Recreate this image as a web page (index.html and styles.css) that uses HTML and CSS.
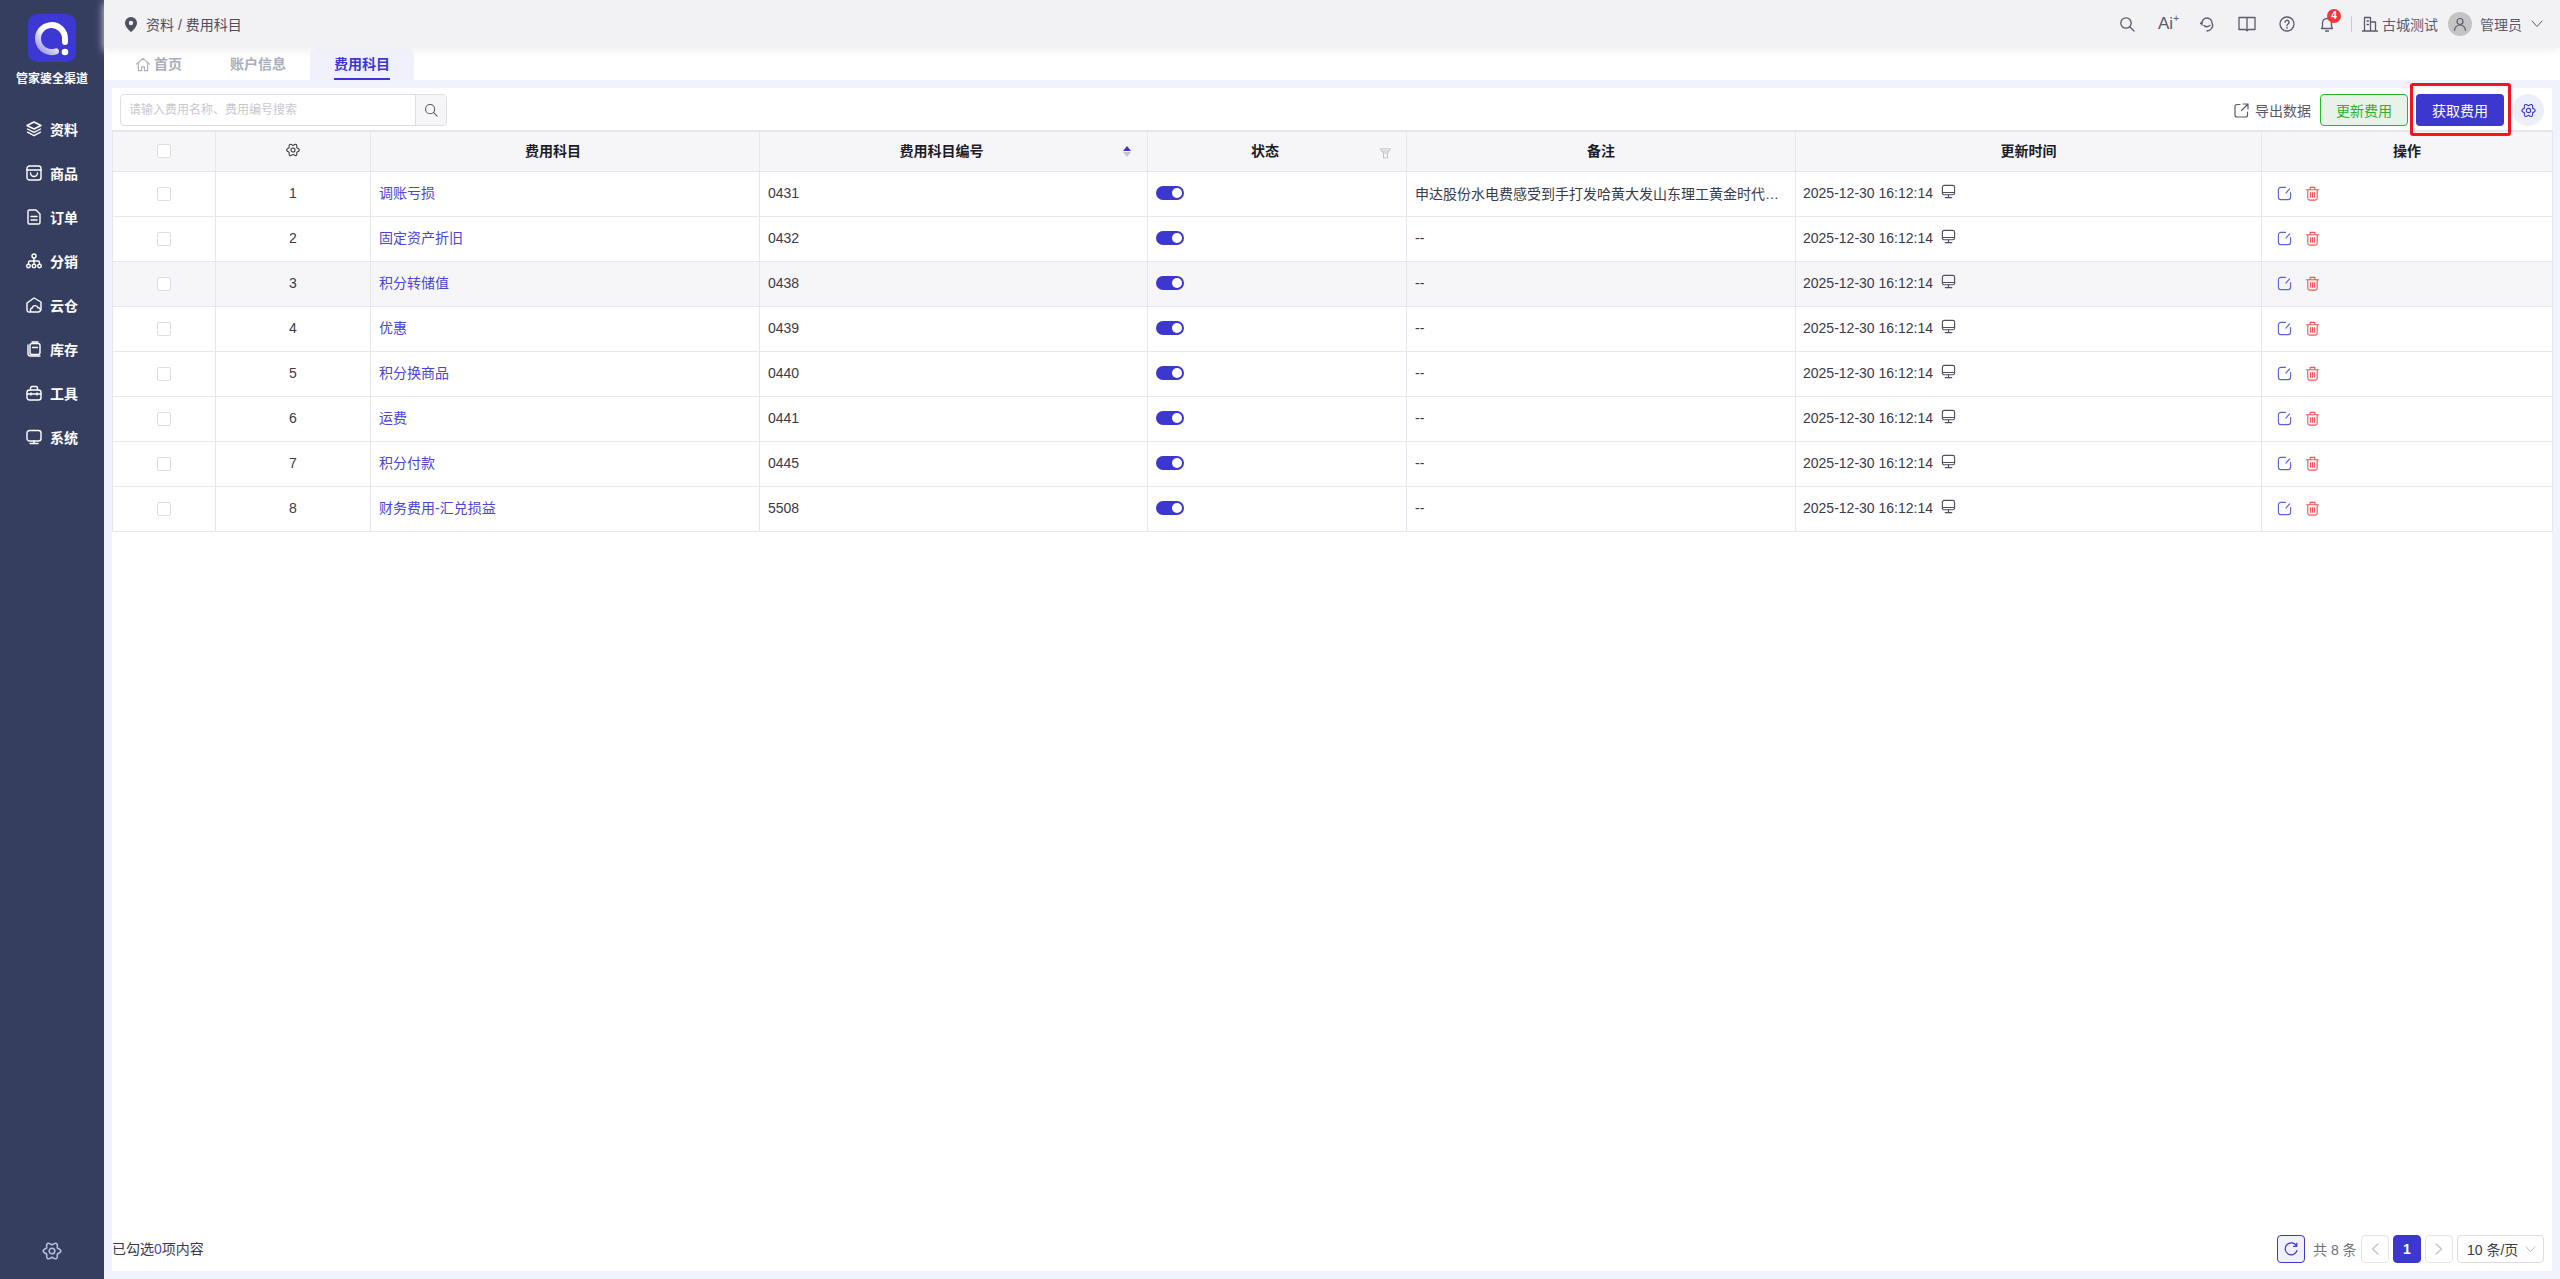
FILE: index.html
```html
<!DOCTYPE html>
<html lang="zh-CN">
<head>
    <meta charset="UTF-8">
    <title>费用科目</title>
    <link rel="stylesheet" href="styles.css">
</head>
<body>
    <svg class="sprite" width="0" height="0">
        <symbol id="i-gear" viewBox="-1 -1 18 18"><path d="M12.330 5.500Q18.070 8 12.330 10.500 13.030 16.720 8 13 2.970 16.720 3.670 10.500-2.070 8 3.670 5.500 2.970-.72 8 3 13.030-.72 12.330 5.500z"/><circle cx="8" cy="8" r="2.300"/></symbol>
        <symbol id="i-monitor" viewBox="0 0 16 16"><rect x="1.500" y="1.500" width="13" height="10" rx="2"/><path d="M1.500 9h13M8 11.500v3M4.500 14.500h7"/></symbol>
        <symbol id="i-edit" viewBox="0 0 16 16"><path d="M9 1.500H4A2.500 2.500 0 0 0 1.500 4v8A2.500 2.500 0 0 0 4 14.500h8a2.500 2.500 0 0 0 2.500-2.500V7"/><path d="M13.500 3 9.500 7.500"/></symbol>
        <symbol id="i-trash" viewBox="0 0 16 16"><path d="M1.500 4h13M5.500 4V1.500h5V4M3 4v9a2 2 0 0 0 2 2h6a2 2 0 0 0 2-2V4M6 7v5M8 7v5M10 7v5"/></symbol>
    </svg>

    <div class="app">
        <div class="sidebar">
            <div class="logo">
                <svg width="48" height="48" viewBox="0 0 48 48">
                    <defs>
                        <linearGradient id="ring" gradientUnits="userSpaceOnUse" x1="34" y1="14" x2="14" y2="36">
                            <stop offset="0.450" stop-color="#ffffff"/>
                            <stop offset="1" stop-color="#a9a6ea"/>
                        </linearGradient>
                    </defs>
                    <rect width="48" height="48" rx="9" fill="#3d38d4" stroke="none"/>
                    <path d="M28 37.300A13.500 13.500 0 1 1 37 25V28" fill="none" stroke="url(#ring)" stroke-width="6" stroke-linecap="round"/>
                    <circle cx="37" cy="38" r="3.300" fill="#fff" stroke="none"/>
                </svg>
            </div>
            <div class="brand">管家婆全渠道</div>
            <ul class="menu">
                <li><svg viewBox="0 0 16 16"><path d="M8 1 15 4.500 8 8 1 4.500zM1.500 8 8 11.300 14.500 8M1.500 11.200 8 14.700l6.500-3.500"/></svg>资料</li>
                <li><svg viewBox="0 0 16 16"><rect x="1" y="1" width="14" height="14" rx="2.500"/><path d="M1 5h14M4.500 8a3.500 3.500 0 0 0 7 0"/></svg>商品</li>
                <li><svg viewBox="0 0 16 16"><path d="M10 1H3.500A1.500 1.500 0 0 0 2 2.500v11A1.500 1.500 0 0 0 3.500 15h9a1.500 1.500 0 0 0 1.500-1.500V5zM5 7.500h6M5 11h6"/></svg>订单</li>
                <li><svg viewBox="0 0 16 16"><circle cx="8" cy="3" r="2"/><circle cx="2.500" cy="13" r="1.800"/><circle cx="8" cy="13" r="1.800"/><circle cx="13.500" cy="13" r="1.800"/><path d="M8 5v6M2.500 11V9.500A1.500 1.500 0 0 1 4 8h8a1.500 1.500 0 0 1 1.500 1.500V11"/></svg>分销</li>
                <li><svg viewBox="0 0 16 16"><path d="M5 15H3a2 2 0 0 1-2-2V6l7-5 7 4v8"/><path d="M6.500 15a2 2 0 0 1-.3-4 3 3 0 0 1 5.800-.2 2.100 2.100 0 0 1 .5 4.200z"/></svg>云仓</li>
                <li><svg viewBox="0 0 16 16"><rect x="4" y="2.500" width="10" height="11" rx="2"/><path d="M6 1h6M2 4v8.500A2.500 2.500 0 0 0 4.500 15H14M6.500 6.500h5"/></svg>库存</li>
                <li><svg viewBox="0 0 16 16"><rect x="1" y="5" width="14" height="10" rx="2.500"/><path d="M4.500 5V3a1.500 1.500 0 0 1 1.500-1.500h4A1.500 1.500 0 0 1 11.500 3v2M1 9h14M5 8v2M11 8v2"/></svg>工具</li>
                <li><svg viewBox="0 0 16 16"><rect x="1" y="1.500" width="14" height="10.500" rx="2.500"/><path d="M8 12v2.500M4 14.500h8"/></svg>系统</li>
            </ul>
            <svg class="side-gear"><use href="#i-gear"/></svg>
        </div>

        <div class="main">
            <div class="topbar">
                <div class="crumb">
                    <svg width="12" height="15" viewBox="0 0 12 15"><path d="M6 0a6 6 0 0 1 6 6c0 3.500-3.500 7-6 9-2.500-2-6-5.500-6-9a6 6 0 0 1 6-6z" fill="#4f5060" stroke="none"/><circle cx="6" cy="6" r="2.200" fill="#f2f2f6" stroke="none"/></svg>
                    <span>资料 / 费用科目</span>
                </div>
                <div class="top-tools">
                    <svg class="ti" viewBox="0 0 16 16"><circle cx="7" cy="7" r="5.200"/><path d="m11 11 4 4"/></svg>
                    <span class="ai">Ai<sup>+</sup></span>
                    <svg class="ti" viewBox="0 0 16 16"><path d="M3 9V7a5 5 0 0 1 10 0 5 5 0 0 1-.5 5.500C11.500 14 10 14.800 8 15M1.500 7.500 3 6M5 9.500c1.500 1.500 4 1.500 6 0"/></svg>
                    <svg class="ti ti-book" viewBox="0 0 18 16"><path d="M1 1.500h16v12h-6.500L9 14.800l-1.500-1.300H1zM9 1.500v12"/></svg>
                    <svg class="ti" viewBox="0 0 16 16"><circle cx="8" cy="8" r="7"/><path d="M6 6.300a2 2 0 1 1 3 1.700c-.7.400-1 .8-1 1.700M8 11.500v.8"/></svg>
                    <span class="bell">
                        <svg class="ti" viewBox="0 0 16 16"><path d="M2.500 12.500h11l-1-2V7a4.500 4.500 0 0 0-9 0v3.500zM6.500 15h3"/></svg>
                        <b class="badge">4</b>
                    </span>
                    <i class="sep"></i>
                    <svg class="ti ti-org" viewBox="0 0 16 16"><path d="M.5 15h15M2.500 15V1.500h6V15M8.500 6h5v9M5 5h1.500M5 8.500h1.500"/></svg>
                    <span class="org">古城测试</span>
                    <span class="avatar"><svg width="14" height="14" viewBox="0 0 14 14"><circle cx="7" cy="4.500" r="3"/><path d="M1.500 13.500a5.500 5.500 0 0 1 11 0"/></svg></span>
                    <span class="user">管理员</span>
                    <svg class="chev" width="12" height="8" viewBox="0 0 12 8"><path d="m1 1 5 5.500L11 1"/></svg>
                </div>
            </div>

            <div class="tabs">
                <div class="tab tab-home">
                    <svg width="15" height="15" viewBox="0 0 15 15"><path d="M.8 7 7.500 1l6.700 6M2.500 6v8h3.500v-4h3v4h3.500V6"/></svg>
                    首页
                </div>
                <div class="tab">账户信息</div>
                <div class="tab active"><span>费用科目</span></div>
            </div>

            <div class="content">
                <div class="panel">
                    <div class="toolbar">
                        <div class="search">
                            <input type="text" placeholder="请输入费用名称、费用编号搜索">
                            <button><svg width="14" height="14" viewBox="0 0 16 16"><circle cx="7" cy="7" r="5.200"/><path d="m11 11 4 4"/></svg></button>
                        </div>
                        <div class="actions">
                            <span class="export">
                                <svg width="15" height="15" viewBox="0 0 15 15"><path d="M6 1.500H3A2 2 0 0 0 1 3.500v8.500a2 2 0 0 0 2 2h8.500a2 2 0 0 0 2-2V9M9 1h5v5M14 1 7.500 7.500"/></svg>
                                导出数据
                            </span>
                            <button class="btn btn-green">更新费用</button>
                            <span class="marked"><button class="btn btn-primary">获取费用</button></span>
                            <span class="round-gear"><svg><use href="#i-gear"/></svg></span>
                        </div>
                    </div>

                    <table class="grid">
                        <colgroup>
                            <col class="c1"><col class="c2"><col class="c3"><col class="c4"><col class="c5"><col class="c6"><col class="c7"><col class="c8">
                        </colgroup>
                        <thead>
                            <tr>
                                <th><i class="check"></i></th>
                                <th><svg class="gear-head"><use href="#i-gear"/></svg></th>
                                <th class="has-icon">费用科目</th>
                                <th class="has-icon">费用科目编号<span class="sort"><i class="up"></i><i class="down"></i></span></th>
                                <th class="has-icon">状态<svg class="filter" width="11" height="11" viewBox="0 0 11 11"><path d="M.5.800h10L7.500 5H3.500zM3.500 5v5h4V5M2 3h7"/></svg></th>
                                <th>备注</th>
                                <th>更新时间</th>
                                <th>操作</th>
                            </tr>
                        </thead>
                        <tbody>
                            <tr>
                                <td class="mid"><i class="check"></i></td><td class="mid">1</td><td><a>调账亏损</a></td><td>0431</td>
                                <td><i class="switch"></i></td><td>申达股份水电费感受到手打发哈黄大发山东理工黄金时代…</td>
                                <td><span class="when">2025-12-30 16:12:14<svg><use href="#i-monitor"/></svg></span></td>
                                <td><svg class="op-edit"><use href="#i-edit"/></svg><svg class="op-del"><use href="#i-trash"/></svg></td>
                            </tr>
                            <tr>
                                <td class="mid"><i class="check"></i></td><td class="mid">2</td><td><a>固定资产折旧</a></td><td>0432</td>
                                <td><i class="switch"></i></td><td>--</td>
                                <td><span class="when">2025-12-30 16:12:14<svg><use href="#i-monitor"/></svg></span></td>
                                <td><svg class="op-edit"><use href="#i-edit"/></svg><svg class="op-del"><use href="#i-trash"/></svg></td>
                            </tr>
                            <tr class="hover">
                                <td class="mid"><i class="check"></i></td><td class="mid">3</td><td><a>积分转储值</a></td><td>0438</td>
                                <td><i class="switch"></i></td><td>--</td>
                                <td><span class="when">2025-12-30 16:12:14<svg><use href="#i-monitor"/></svg></span></td>
                                <td><svg class="op-edit"><use href="#i-edit"/></svg><svg class="op-del"><use href="#i-trash"/></svg></td>
                            </tr>
                            <tr>
                                <td class="mid"><i class="check"></i></td><td class="mid">4</td><td><a>优惠</a></td><td>0439</td>
                                <td><i class="switch"></i></td><td>--</td>
                                <td><span class="when">2025-12-30 16:12:14<svg><use href="#i-monitor"/></svg></span></td>
                                <td><svg class="op-edit"><use href="#i-edit"/></svg><svg class="op-del"><use href="#i-trash"/></svg></td>
                            </tr>
                            <tr>
                                <td class="mid"><i class="check"></i></td><td class="mid">5</td><td><a>积分换商品</a></td><td>0440</td>
                                <td><i class="switch"></i></td><td>--</td>
                                <td><span class="when">2025-12-30 16:12:14<svg><use href="#i-monitor"/></svg></span></td>
                                <td><svg class="op-edit"><use href="#i-edit"/></svg><svg class="op-del"><use href="#i-trash"/></svg></td>
                            </tr>
                            <tr>
                                <td class="mid"><i class="check"></i></td><td class="mid">6</td><td><a>运费</a></td><td>0441</td>
                                <td><i class="switch"></i></td><td>--</td>
                                <td><span class="when">2025-12-30 16:12:14<svg><use href="#i-monitor"/></svg></span></td>
                                <td><svg class="op-edit"><use href="#i-edit"/></svg><svg class="op-del"><use href="#i-trash"/></svg></td>
                            </tr>
                            <tr>
                                <td class="mid"><i class="check"></i></td><td class="mid">7</td><td><a>积分付款</a></td><td>0445</td>
                                <td><i class="switch"></i></td><td>--</td>
                                <td><span class="when">2025-12-30 16:12:14<svg><use href="#i-monitor"/></svg></span></td>
                                <td><svg class="op-edit"><use href="#i-edit"/></svg><svg class="op-del"><use href="#i-trash"/></svg></td>
                            </tr>
                            <tr>
                                <td class="mid"><i class="check"></i></td><td class="mid">8</td><td><a>财务费用-汇兑损益</a></td><td>5508</td>
                                <td><i class="switch"></i></td><td>--</td>
                                <td><span class="when">2025-12-30 16:12:14<svg><use href="#i-monitor"/></svg></span></td>
                                <td><svg class="op-edit"><use href="#i-edit"/></svg><svg class="op-del"><use href="#i-trash"/></svg></td>
                            </tr>
                        </tbody>
                    </table>

                    <div class="footer">
                        <div class="picked">已勾选<em>0</em>项内容</div>
                        <div class="pager">
                            <span class="refresh"><svg width="14" height="14" viewBox="0 0 14 14"><path d="M12.500 4A6 6 0 1 0 13 8.500M12.800 1v3.300H9.500"/></svg></span>
                            <span class="total">共 8 条</span>
                            <span class="page-btn"><svg width="8" height="12" viewBox="0 0 8 12"><path d="M7 1 1.500 6 7 11"/></svg></span>
                            <span class="page-btn current">1</span>
                            <span class="page-btn"><svg width="8" height="12" viewBox="0 0 8 12"><path d="M1 1l5.500 5L1 11"/></svg></span>
                            <span class="page-size">10 条/页<svg width="11" height="7" viewBox="0 0 12 8"><path d="m1 1 5 5.500L11 1"/></svg></span>
                        </div>
                    </div>
                </div>
            </div>
        </div>
    </div>
</body>
</html>
```

FILE: styles.css
```css
* {
    box-sizing: border-box;
}

html, body {
    margin: 0;
    padding: 0;
    height: 100%;
}

body {
    font-family: "Liberation Sans", "Noto Sans CJK SC", sans-serif;
    font-size: 14px;
    color: #3a3a4a;
    background-color: #f0f2fe;
    overflow: hidden;
}

svg {
    fill: none;
    stroke: currentColor;
    stroke-width: 1.2;
    stroke-linecap: round;
    stroke-linejoin: round;
}

.sprite {
    position: absolute;
}

.app {
    display: flex;
    height: 100vh;
}

/* sidebar */
.sidebar {
    width: 104px;
    flex-shrink: 0;
    background-color: #363e60;
    color: #fff;
    display: flex;
    flex-direction: column;
    align-items: center;
    padding-top: 14px;
}

.logo {
    height: 48px;
}

.logo svg {
    display: block;
}

.brand {
    margin-top: 9px;
    font-size: 12px;
    font-weight: bold;
    line-height: 16px;
}

.menu {
    list-style-type: none;
    margin: 20px 0 0;
    padding: 0;
    width: 100%;
}

.menu li {
    display: flex;
    align-items: center;
    height: 44px;
    padding-left: 26px;
    font-weight: bold;
    font-size: 14px;
    gap: 8px;
}

.menu li svg {
    width: 16px;
    height: 16px;
    stroke-width: 1.400;
}

.side-gear {
    width: 22px;
    height: 22px;
    margin-top: auto;
    margin-bottom: 17px;
    color: #b3bbe0;
    stroke-width: 1.300;
}

/* top */
.main {
    flex: 1;
    min-width: 0;
    display: flex;
    flex-direction: column;
}

.topbar {
    height: 48px;
    flex-shrink: 0;
    background-color: #f2f2f5;
    display: flex;
    align-items: center;
    justify-content: space-between;
    padding: 0 17px 0 21px;
    position: relative;
    z-index: 1;
    box-shadow: 0 3px 8px rgba(240, 240, 244, 0.9);
}

.crumb {
    display: flex;
    align-items: center;
    gap: 9px;
    color: #4d4d5c;
}

.top-tools {
    display: flex;
    align-items: center;
    color: #5a5a6c;
}

.ti {
    width: 16px;
    height: 16px;
    margin-right: 23px;
    stroke-width: 1.300;
}

.ti-book {
    width: 18px;
}

.ai {
    font-size: 17px;
    width: 20px;
    margin-right: 21px;
    line-height: 20px;
    white-space: nowrap;
}

.ai sup {
    font-size: 10px;
    line-height: 0;
}

.bell {
    position: relative;
    display: flex;
    margin-left: 1px;
}

.bell .ti {
    margin-right: 16px;
}

.badge {
    position: absolute;
    left: 8px;
    top: -7px;
    width: 14px;
    height: 14px;
    border-radius: 50%;
    background-color: #f0383c;
    color: #fff;
    font-size: 10px;
    line-height: 14px;
    text-align: center;
}

.sep {
    width: 1px;
    height: 16px;
    background-color: #c4c8e4;
    margin-right: 10px;
}

.ti-org {
    margin-right: 4px;
}

.org {
    margin-right: 10px;
}

.avatar {
    width: 24px;
    height: 24px;
    border-radius: 50%;
    background-color: #c4c4c4;
    display: flex;
    align-items: center;
    justify-content: center;
    margin-right: 8px;
}

.user {
    margin-right: 9px;
}

.chev {
    stroke-width: 1;
}

/* tabs */
.tabs {
    height: 32px;
    flex-shrink: 0;
    background-color: #fff;
    display: flex;
    padding-left: 32px;
}

.tab {
    width: 56px;
    margin-right: 24px;
    font-weight: bold;
    color: #a9adbd;
    line-height: 32px;
    white-space: nowrap;
}

.tab-home {
    display: flex;
    align-items: center;
    gap: 4px;
    width: 46px;
    margin-right: 48px;
}

.tab.active {
    width: 104px;
    background-color: #f0f1fd;
    border-radius: 8px 8px 0 0;
    color: #3b37cf;
    text-align: center;
}

.tab.active span {
    display: inline-block;
    height: 32px;
    border-bottom: 2px solid #3b37cf;
}

/* panel */
.content {
    flex: 1;
    min-height: 0;
    padding: 8px 8px 8px 8px;
}

.panel {
    height: 100%;
    background-color: #fff;
    display: flex;
    flex-direction: column;
}

.toolbar {
    height: 42px;
    flex-shrink: 0;
    display: flex;
    justify-content: space-between;
    padding: 6px 8px 0;
}

.search {
    display: flex;
    height: 32px;
    width: 327px;
    border: 1px solid #dedee6;
    border-radius: 4px;
}

.search input {
    flex: 1;
    min-width: 0;
    border: none;
    outline: none;
    background: transparent;
    font-family: inherit;
    font-size: 12px;
    padding: 0 8px;
}

.search input::placeholder {
    color: #c8c8d0;
}

.search button {
    width: 31px;
    border: none;
    border-left: 1px solid #dedee6;
    border-radius: 0 4px 4px 0;
    background-color: #f6f6f9;
    color: #55556a;
    padding: 2px 0 0;
}

.actions {
    display: flex;
    align-items: flex-start;
}

.export {
    display: flex;
    align-items: center;
    height: 32px;
    gap: 6px;
    color: #5a5a6c;
    margin-right: 9px;
}

.btn {
    display: block;
    width: 88px;
    height: 32px;
    border-radius: 4px;
    font-family: inherit;
    font-size: 14px;
    padding: 0;
}

.btn-green {
    background-color: #e8f2e8;
    border: 1px solid #25b52e;
    color: #25b52e;
}

.btn-primary {
    background-color: #3b37cf;
    border: none;
    color: #fff;
}

.marked {
    position: relative;
    z-index: 1;
    margin-left: 8px;
}

/* red annotation box around the button */
.marked::after {
    content: "";
    position: absolute;
    left: -6px;
    top: -11px;
    box-sizing: border-box;
    width: 101px;
    height: 53px;
    border: 3px solid #f5141c;
    border-radius: 3px;
}

.round-gear {
    width: 32px;
    height: 32px;
    margin-left: 8px;
    border-radius: 50%;
    background-color: #eceefc;
    color: #3b37cf;
    display: flex;
    align-items: center;
    justify-content: center;
}

.round-gear svg {
    width: 17px;
    height: 17px;
}

/* table */
.grid {
    table-layout: fixed;
    border-collapse: collapse;
    width: 2440px;
    flex-shrink: 0;
    border-top: 2px solid #e6e6ee;
    color: #3a3a4a;
}

.c1 { width: 103px; }
.c2 { width: 155px; }
.c3 { width: 389px; }
.c4 { width: 388px; }
.c5 { width: 259px; }
.c6 { width: 389px; }
.c7 { width: 466px; }
.c8 { width: 291px; }

.grid th {
    height: 40px;
    background-color: #f6f6f9;
    border: 1px solid #e6e6ee;
    border-top: none;
    font-weight: bold;
    color: #1c1c28;
    padding: 0 0 3px;
    position: relative;
}

.grid th.has-icon {
    padding-right: 24px;
}

.grid td {
    height: 45px;
    border: 1px solid #e6e6ee;
    padding: 0 8px 2px;
    vertical-align: middle;
    white-space: nowrap;
    overflow: hidden;
}

.grid td.mid {
    text-align: center;
}

.grid a {
    display: inline-block;
    margin-bottom: 2px;
    color: #4a46d6;
}

.grid .hover td {
    background-color: #f6f6f9;
}

.check {
    display: inline-block;
    width: 14px;
    height: 14px;
    vertical-align: middle;
    background-color: #fff;
    border: 1px solid #dcdce4;
    border-radius: 2px;
}

.gear-head {
    width: 16px;
    height: 16px;
    color: #33333f;
    vertical-align: middle;
}

.sort {
    position: absolute;
    right: 16px;
    top: 14px;
    display: flex;
    flex-direction: column;
    gap: 1px;
}

.sort i {
    display: block;
    border-left: 4px solid transparent;
    border-right: 4px solid transparent;
}

.sort .up {
    border-bottom: 5px solid #3b37cf;
}

.sort .down {
    border-top: 5px solid #c4c4cc;
}

.filter {
    position: absolute;
    right: 15px;
    top: 16px;
    color: #c0c0c8;
    stroke-width: 1;
}

.switch {
    display: block;
    position: relative;
    width: 28px;
    height: 14px;
    border-radius: 7px;
    background-color: #3b37cf;
}

.switch::after {
    content: "";
    position: absolute;
    right: 2px;
    top: 2px;
    width: 10px;
    height: 10px;
    border-radius: 50%;
    background-color: #fff;
}

.when {
    display: inline-flex;
    align-items: center;
    gap: 8px;
    margin-left: -1px;
}

.when svg {
    width: 15px;
    height: 15px;
    margin-top: -3px;
    color: #4f4f60;
}

.op-edit, .op-del {
    width: 15px;
    height: 15px;
    vertical-align: middle;
    margin-left: 7px;
}

.op-edit {
    color: #5a62e0;
}

.op-del {
    color: #f4555a;
    margin-left: 13px;
}

/* footer */
.footer {
    margin-top: auto;
    height: 44px;
    flex-shrink: 0;
    display: flex;
    justify-content: space-between;
    align-items: center;
    padding: 0 8px 0 0;
}

.picked {
    margin-bottom: 3px;
}

.picked em {
    font-style: normal;
    color: #4a46d6;
}

.pager {
    display: flex;
    align-items: center;
    gap: 4px;
    color: #3a3a4a;
}

.refresh {
    width: 28px;
    height: 28px;
    border: 1px solid #3b37cf;
    border-radius: 4px;
    background-color: #f0f1fd;
    color: #3b37cf;
    display: flex;
    align-items: center;
    justify-content: center;
}

.total {
    color: #70707e;
    margin: 0 0 0 4px;
    width: 44px;
    white-space: nowrap;
}

.page-btn {
    width: 28px;
    height: 28px;
    border: 1px solid #e4e4ec;
    border-radius: 4px;
    color: #c0c0c8;
    display: flex;
    align-items: center;
    justify-content: center;
}

.page-btn.current {
    background-color: #3b37cf;
    border-color: #3b37cf;
    color: #fff;
    font-weight: bold;
}

.page-size {
    width: 87px;
    height: 28px;
    border: 1px solid #dcdce4;
    border-radius: 4px;
    display: flex;
    align-items: center;
    justify-content: space-between;
    padding: 0 7px 0 9px;
    white-space: nowrap;
}

.page-size svg {
    color: #b0b0ba;
    stroke-width: 1;
}
```
